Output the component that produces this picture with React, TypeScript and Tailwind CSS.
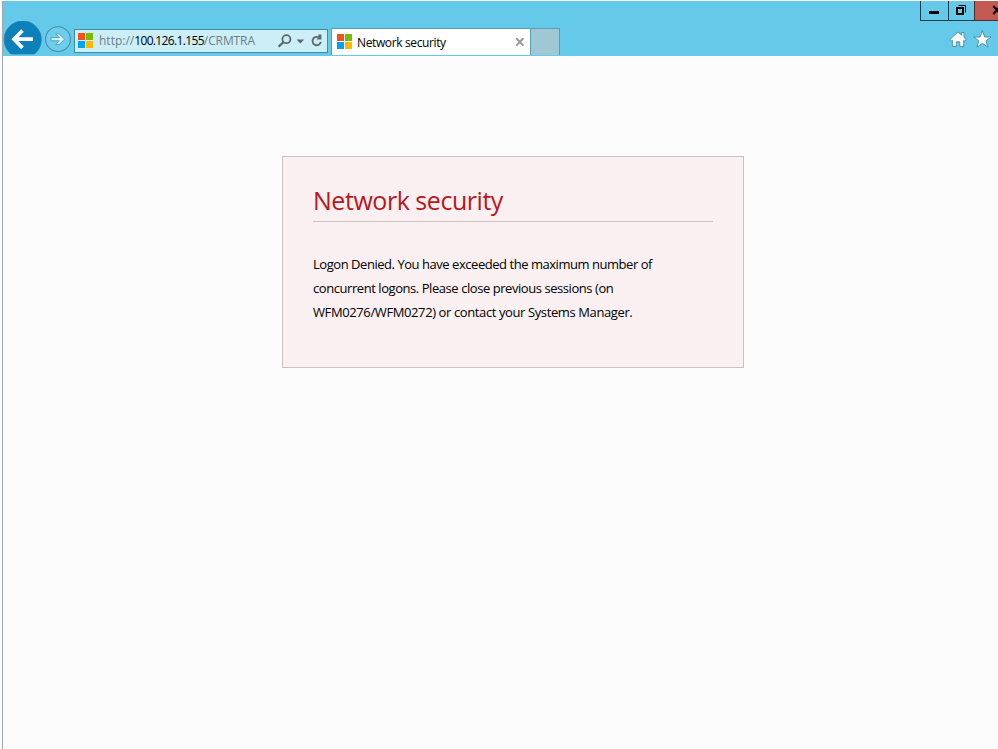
import React from "react";

function WindowsLogo() {
  return (
    <div className="mb-[2px] grid h-[15px] w-[15px] shrink-0 grid-cols-2 gap-px">
      <span className="bg-[#f1511b]" />
      <span className="bg-[#7cb900]" />
      <span className="bg-[#00a3ee]" />
      <span className="bg-[#fcb900]" />
    </div>
  );
}

function NavButtons() {
  return (
    <svg width="71" height="35" viewBox="3 21 71 35" className="shrink-0">
      <path d="M11 54A18.6 18.6 0 1 1 34.5 54Z" fill="#0c80b8" stroke="#1d86b4" strokeWidth="0.8" />
      <path d="M33 39.2H15M22.5 30.5L14 39.2L22.5 47.9" fill="none" stroke="#fff" strokeWidth="3.7" />
      <circle cx="58" cy="39.2" r="12.4" fill="#6fcdec" stroke="#438fab" strokeWidth="1.1" />
      <path
        d="M51 37.6H59.3L55.6 33.8H59L64.6 39.2L59 44.6H55.6L59.3 40.8H51Z"
        fill="#d5f4fd"
        stroke="#4b9cb7"
        strokeWidth="0.9"
      />
    </svg>
  );
}

function AddressBar() {
  return (
    <div className="mt-[8px] flex h-[24px] w-[254px] shrink-0 items-center border border-[#438b9f] bg-[#cbeef7] pl-[3px]">
      <WindowsLogo />
      <div className="ml-[6px] w-[177px] whitespace-nowrap text-[12px] leading-[20px] text-[#6e7f86]">
        <span>http://</span>
        <span className="tracking-[-0.65px] text-black">100.126.1.155</span>
        <span className="tracking-[-0.1px]">/CRMTRA</span>
      </div>
      <svg width="50" height="22" viewBox="276 30 50 22" className="shrink-0" fill="none" stroke="#59696e">
        <circle cx="286.4" cy="39.2" r="4" strokeWidth="1.8" />
        <path d="M283.4 42.3L278.6 46.6" strokeWidth="2.2" />
        <path d="M296.5 39.5H304.2L300.35 43.5Z" fill="#59696e" stroke="none" />
        <path d="M318.6 37.3A4.2 4.2 0 1 0 320.8 41.9" strokeWidth="1.8" />
        <path d="M321.4 34.6V39.6H316.4L318.4 37.6V34.6Z" fill="#59696e" stroke="none" />
      </svg>
    </div>
  );
}

function Tab() {
  return (
    <div className="ml-[3px] mt-[7px] flex h-[27px] w-[200px] shrink-0 items-center border border-b-0 border-[#5a9eb4] bg-white pl-[5px]">
      <WindowsLogo />
      <span className="ml-[5px] mt-[2px] w-[158px] whitespace-nowrap text-[12px] leading-[20px] tracking-[-0.37px] text-black">
        Network security
      </span>
      <svg width="10" height="10" viewBox="0 0 10 10" stroke="#999" strokeWidth="2">
        <path d="M1.2 1.2L8.4 8.6M8.4 1.2L1.2 8.6" />
      </svg>
    </div>
  );
}

function WindowControls() {
  return (
    <div className="flex h-[20px] justify-end">
      <div className="flex h-[20px] w-[28px] items-end justify-center border-b border-l border-[#183c49] pb-[6px]">
        <span className="ml-[-1px] h-[3px] w-[10px] bg-black" />
      </div>
      <div className="h-[20px] w-[26px] border-b border-l border-[#183c49]">
        <svg width="25" height="19" viewBox="949 1 25 19" fill="none" stroke="#000">
          <rect x="957" y="8" width="6" height="6" strokeWidth="2" />
          <path d="M958.5 5.5H965.5V12.5" strokeWidth="1" />
        </svg>
      </div>
      <div className="h-[20px] w-[24px] border-b border-l border-[#4a302d] bg-[#c25a51]">
        <svg width="23" height="19" viewBox="975 1 23 19" fill="none" stroke="#000" strokeWidth="2.2">
          <path d="M993.3 6L1001 14M1001 6L993.3 14" />
        </svg>
      </div>
    </div>
  );
}

function CommandIcons() {
  return (
    <svg width="51" height="35" viewBox="947 21 51 35" className="ml-auto shrink-0" fill="#fff" stroke="#397f96" strokeWidth="0.8">
      <path d="M958 31.9L961.6 35.2V32.7H964V37.5L966.2 39.6L964.6 41L963.7 40.3V46.6H959.8V41.8H956.3V46.6H952.4V40.3L951.4 41L949.8 39.6Z" />
      <path d="M982.4 30.6L984.7 37H991L986 40.8L987.8 47L982.4 43.4L977 47L978.8 40.8L973.8 37H980.1Z" />
    </svg>
  );
}

export default function App() {
  return (
    <div className="h-[749px] w-[998px] overflow-hidden bg-[#fcfcfc] pt-px font-['Open_Sans','Noto_Sans',sans-serif]">
      <div className="ml-[2px] h-[748px] border-l border-[#a2a4a5]">
        <header className="h-[55px] bg-[#65caea]">
          <WindowControls />
          <div className="flex h-[35px]">
            <NavButtons />
            <AddressBar />
            <Tab />
            <div className="mt-[7px] h-[27px] w-[29px] shrink-0 border border-b-0 border-l-0 border-[#5a9eb4] bg-[#9fc7d4]" />
            <CommandIcons />
          </div>
        </header>
        <main className="pl-[279px] pt-[100px]">
          <section className="h-[212px] w-[462px] border border-[#cdbfc4] bg-[#faf0f1] px-[30px] pt-[26px]">
            <h1 className="h-[39px] whitespace-nowrap border-b border-[#c9c2c3] text-[25px] leading-[35px] tracking-[-0.46px] text-[#b9171b]">
              Network security
            </h1>
            <p className="mt-[30px] whitespace-nowrap text-[13px] leading-[24px] text-black">
              <span className="block tracking-[-0.46px]">Logon Denied. You have exceeded the maximum number of</span>
              <span className="block tracking-[-0.44px]">concurrent logons. Please close previous sessions (on</span>
              <span className="block tracking-[-0.39px]">WFM0276/WFM0272) or contact your Systems Manager.</span>
            </p>
          </section>
        </main>
      </div>
    </div>
  );
}
